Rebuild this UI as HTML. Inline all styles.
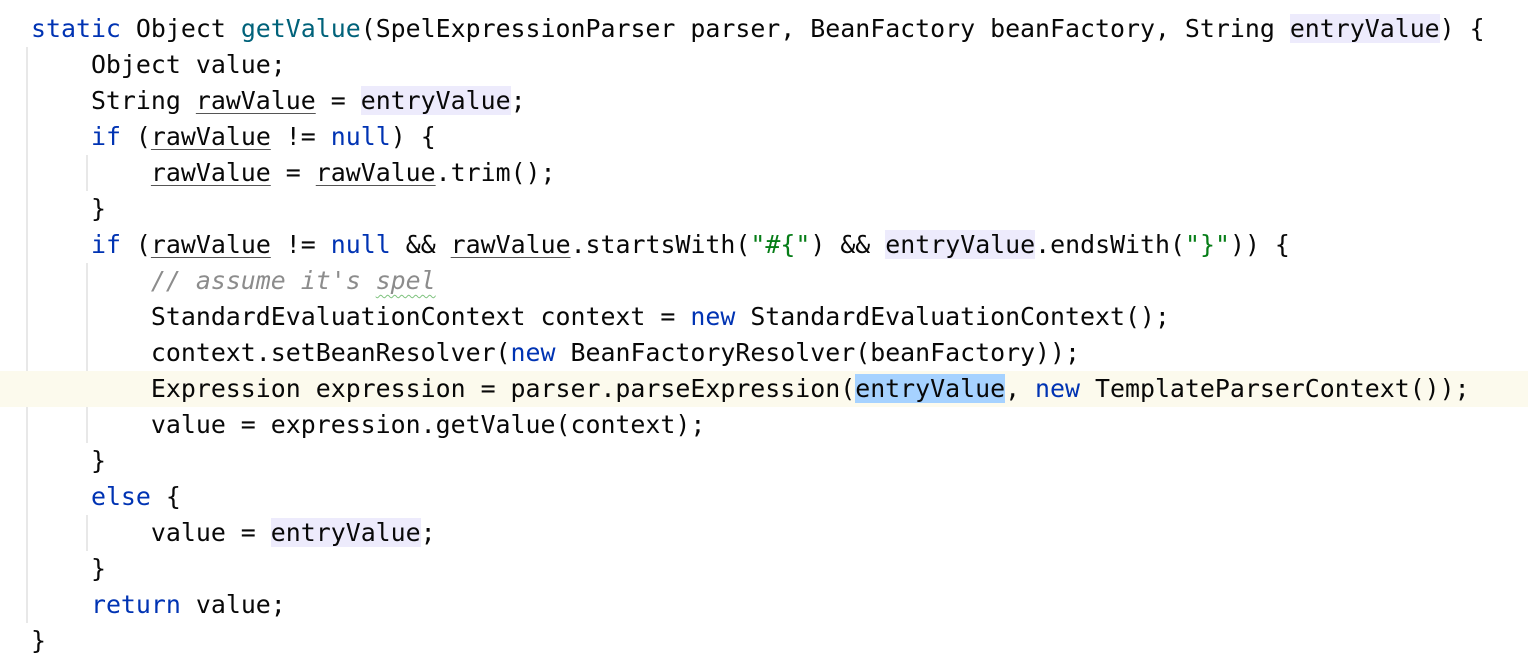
<!DOCTYPE html>
<html><head><meta charset="utf-8"><style>
html,body{margin:0;padding:0;background:#fff;width:1528px;height:667px;overflow:hidden}
.code{position:absolute;top:11px;left:0;width:1528px;font-family:"DejaVu Sans Mono","Liberation Mono",monospace;font-size:24.9px;color:#080808}
.l{height:36px;line-height:36px;white-space:pre;padding-left:31px;position:relative}
.caret{background:#fcfaed}
.k{color:#0033b3}.m{color:#00627a}.s{color:#067d17}.c{color:#8c8c8c;font-style:italic}
.u{text-decoration:underline;text-decoration-color:#555;text-underline-offset:4px;text-decoration-thickness:1px}
.h{background:#edebfc}
.sel{background:#a6d2ff}
.w{text-decoration:underline wavy #7ec27e;text-decoration-thickness:1px;text-underline-offset:5px}
.g{position:absolute;width:2px;background:#e8e8e8}
</style></head><body>
<div class="g" style="left:26px;top:47px;height:576px"></div>
<div class="g" style="left:86px;top:155px;height:36px"></div>
<div class="g" style="left:86px;top:263px;height:180px"></div>
<div class="g" style="left:86px;top:515px;height:36px"></div>
<div class="code">
<div class="l"><span class="k">static</span> Object <span class="m">getValue</span>(SpelExpressionParser parser, BeanFactory beanFactory, String <span class="h">entryValue</span>) {</div>
<div class="l">    Object value;</div>
<div class="l">    String <span class="u">rawValue</span> = <span class="h">entryValue</span>;</div>
<div class="l">    <span class="k">if</span> (<span class="u">rawValue</span> != <span class="k">null</span>) {</div>
<div class="l">        <span class="u">rawValue</span> = <span class="u">rawValue</span>.trim();</div>
<div class="l">    }</div>
<div class="l">    <span class="k">if</span> (<span class="u">rawValue</span> != <span class="k">null</span> &amp;&amp; <span class="u">rawValue</span>.startsWith(<span class="s">"#{"</span>) &amp;&amp; <span class="h">entryValue</span>.endsWith(<span class="s">"}"</span>)) {</div>
<div class="l">        <span class="c">// assume it's <span class="w">spel</span></span></div>
<div class="l">        StandardEvaluationContext context = <span class="k">new</span> StandardEvaluationContext();</div>
<div class="l">        context.setBeanResolver(<span class="k">new</span> BeanFactoryResolver(beanFactory));</div>
<div class="l caret">        Expression expression = parser.parseExpression(<span class="sel">entryValue</span>, <span class="k">new</span> TemplateParserContext());</div>
<div class="l">        value = expression.getValue(context);</div>
<div class="l">    }</div>
<div class="l">    <span class="k">else</span> {</div>
<div class="l">        value = <span class="h">entryValue</span>;</div>
<div class="l">    }</div>
<div class="l">    <span class="k">return</span> value;</div>
<div class="l">}</div>
</div>
</body></html>
